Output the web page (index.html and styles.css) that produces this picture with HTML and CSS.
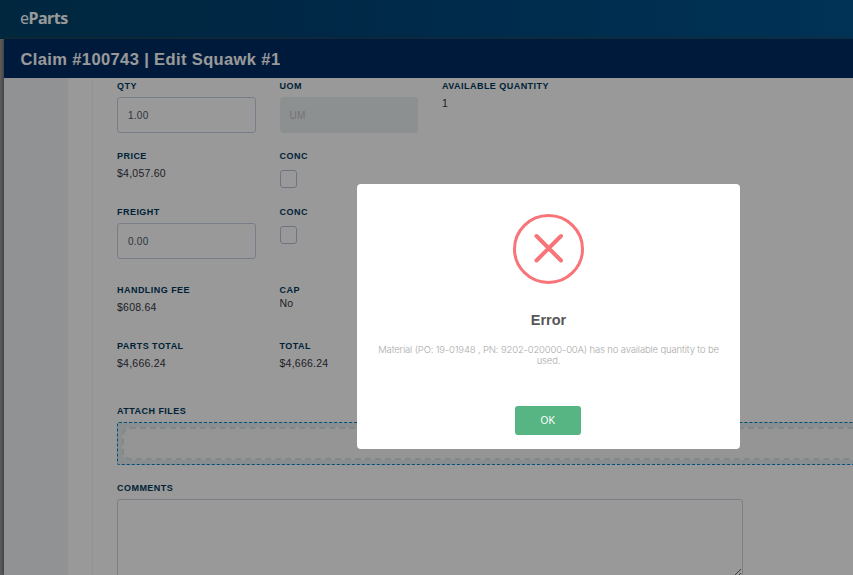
FILE: index.html
```html
<!DOCTYPE html>
<html lang="en">
<head>
<meta charset="utf-8">
<title>eParts</title>
<link rel="stylesheet" href="styles.css">
</head>
<body>
<header class="topbar"><span class="brand"><span class="brand-e">e</span>Parts</span></header>
<div class="panel">
  <h1 class="title">Claim #100743 | Edit Squawk #1</h1>
  <div class="content">
    <aside class="side"></aside>
    <div class="gutter"></div>
    <main class="form">
      <div class="grid">
        <div><label>QTY</label><input class="input" value="1.00"></div>
        <div><label>UOM</label><input class="input disabled" placeholder="UM" disabled></div>
        <div><label>AVAILABLE QUANTITY</label><p class="value">1</p></div>
        <div><label>PRICE</label><p class="value">$4,057.60</p></div>
        <div><label>CONC</label><span class="check"></span></div>
        <div></div>
        <div><label>FREIGHT</label><input class="input" value="0.00"></div>
        <div><label>CONC</label><span class="check"></span></div>
        <div></div>
        <div><label>HANDLING FEE</label><p class="value">$608.64</p></div>
        <div><label>CAP</label><p class="value tight">No</p></div>
        <div></div>
        <div><label>PARTS TOTAL</label><p class="value">$4,666.24</p></div>
        <div><label>TOTAL</label><p class="value">$4,666.24</p></div>
      </div>
      <section class="attach"><label>ATTACH FILES</label><div class="drop"><div class="drop-inner"></div></div></section>
      <section><label>COMMENTS</label><textarea class="comments"></textarea></section>
    </main>
  </div>
</div>
<div class="overlay">
  <div class="modal" role="dialog">
    <svg class="error-icon" viewBox="0 0 71 70" fill="none" stroke="#f87478"><ellipse cx="35.5" cy="35" rx="34" ry="33.5" stroke-width="3"/><path d="M23.5 22 48 46.5M48 22 23.5 46.5" stroke-width="4" stroke-linecap="round"/></svg>
    <h2>Error</h2>
    <p>Material (PO: 19-01948 , PN: 9202-020000-00A) has no available quantity to be used.</p>
    <button class="ok">OK</button>
  </div>
</div>
</body>
</html>
```

FILE: styles.css
```css
* { box-sizing: border-box; }
body { margin: 0; height: 575px; overflow: hidden; background: #999; font-family: "Liberation Sans", Arial, sans-serif; }
.topbar { height: 39px; padding: 7px 0 0 20px; background: linear-gradient(90deg, #004268, #004478 40%, #005590); }
.brand { font: 700 16px/22px "Noto Sans", sans-serif; letter-spacing: -.5px; color: #fff; }
.brand-e { font-weight: 400; }
.panel { margin-left: 4px; height: 536px; display: flex; flex-direction: column; background: #fff; box-shadow: 0 0 4px #444; }
.title { flex: none; margin: 0; height: 39px; padding: 1px 0 0 16.5px; background: #002c64; color: #fff; font-size: 16.5px; line-height: 39px; letter-spacing: .38px; }
.content { display: flex; flex: 1; min-height: 0; }
.side { width: 64px; background: #f0f3f7; }
.gutter { width: 25px; border-right: 1px solid #f4f5f6; }
.form { flex: 1; min-width: 0; padding-left: 24px; overflow: hidden; }
.grid { display: grid; grid-template-columns: repeat(3, 162.5px); grid-template-rows: 70px 56px 78px 56px 65px; }
label { display: block; height: 16px; font-size: 9px; line-height: 16px; font-weight: 700; letter-spacing: .46px; color: #00395c; white-space: nowrap; }
.input { display: block; width: 139px; height: 36px; margin-top: 3px; padding: 1px 10px 0; border: 1px solid #c9d2e4; border-radius: 3px; background: #fff; color: #4d5668; font: 10px "Liberation Sans", sans-serif; letter-spacing: .25px; }
.input.disabled { width: 138px; padding-left: 9px; background: #ecf1f1; border-color: #ecf1f1; }
.disabled::placeholder { color: #bcc2c5; }
.value { margin: 0; font-size: 10.5px; line-height: 19px; letter-spacing: .25px; color: #343743; }
.value.tight { line-height: 11px; }
.check { display: block; width: 17px; height: 18px; margin-top: 6px; border: 1px solid #b6c3dd; border-radius: 3px; }
.drop { width: 760px; height: 43px; margin-top: 3px; padding: 4px; border: 1px dashed #0086c9; border-radius: 2px; background: #e5edf2; }
.drop-inner { height: 33px; border: 2px dashed #dde2e6; border-radius: 8px; background: #f8f8f8; }
.attach { height: 77px; }
.comments { display: block; width: 626px; height: 79px; margin-top: 3px; border: 1px solid #ced2dc; border-radius: 3px; background: #fff; }
.overlay { position: fixed; inset: 0; background: rgba(0,0,0,.4); }
.modal { position: absolute; left: 357px; top: 184px; width: 383px; height: 265px; padding: 30px 17px 0; display: flex; flex-direction: column; align-items: center; border-radius: 4px; background: #fff; text-align: center; }
.error-icon { flex: none; width: 71px; height: 70px; }
.modal h2 { margin: 26px 0 0; font-size: 14.5px; line-height: 20px; color: #575757; }
.modal p { height: 22px; margin: 14px 0 0; font: 300 9.5px/11px Inter, "Liberation Sans", sans-serif; letter-spacing: -.15px; color: #aaa; }
.ok { width: 66px; height: 29px; margin: 40px 1px 0 0; padding: 0; border: 0; border-radius: 3px; background: #56b583; color: #fff; font: 10px "Liberation Sans", sans-serif; letter-spacing: .3px; }
```
